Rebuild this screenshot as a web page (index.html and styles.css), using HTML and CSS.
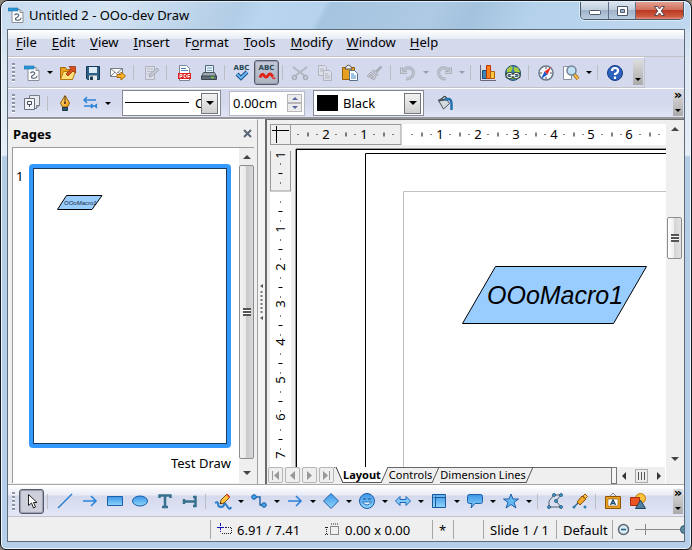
FILE: index.html
```html
<!DOCTYPE html>
<html lang="en">
<head>
<meta charset="utf-8">
<title>Untitled 2 - OOo-dev Draw</title>
<link rel="stylesheet" href="styles.css">
</head>
<body>
<svg class="defs" aria-hidden="true">
  <defs>
    <linearGradient id="blue" x1="0" y1="0" x2="0" y2="1"><stop offset="0" stop-color="#3b95e6"/><stop offset="1" stop-color="#8fd4fb"/></linearGradient>
    <linearGradient id="gold" x1="0" y1="0" x2="1" y2="1"><stop offset="0" stop-color="#ffe98a"/><stop offset="1" stop-color="#f09a10"/></linearGradient>
    <symbol id="doc" viewBox="0 0 16 16"><path d="M4 2.5h8l3 3v10H4z" fill="#fff" stroke="#8b8f99"/><path d="M12 2.500v3h3" fill="#ddd" stroke="#8b8f99"/><path d="M0 1h10v3H0z" fill="#2a96d8" stroke="#1672ac" stroke-width=".6"/><path d="M6.500 8c2-2 5-1 4 1s-3 1-3 3 3 1 4 1 1-2 2-2" fill="none" stroke="#526477" stroke-width="1.200"/></symbol>
  </defs>
</svg>
<div class="window">
  <header class="titlebar">
    <svg class="app-icon"><use href="#doc"/></svg>
    <h1>Untitled 2 - OOo-dev Draw</h1>
    <div class="controls">
      <button class="min" aria-label="Minimize"><svg width="14" height="12"><rect x="1.500" y="5.500" width="11" height="4" rx="1" fill="#fff" stroke="#4c5668"/></svg></button>
      <button class="max" aria-label="Maximize"><svg width="13" height="12"><path d="M1.500 1.500h10v9h-10zM4.500 4.500h4v3h-4z" fill="#fff" fill-rule="evenodd" stroke="#4c5668"/></svg></button>
      <button class="close" aria-label="Close"><svg width="13" height="12"><path d="M1.500 1.500h3l2 2.500 2-2.500h3L8.300 6l3.200 4.500h-3l-2-2.500-2 2.500h-3L4.700 6z" fill="#fff" stroke="#5a4650"/></svg></button>
    </div>
  </header>

  <div class="client">
    <nav class="menubar">
      <button><u>F</u>ile</button><button><u>E</u>dit</button><button><u>V</u>iew</button><button><u>I</u>nsert</button><button>F<u>o</u>rmat</button><button><u>T</u>ools</button><button><u>M</u>odify</button><button><u>W</u>indow</button><button><u>H</u>elp</button>
    </nav>

    <div class="toolbar standard" role="toolbar" aria-label="Standard">
      <i class="grip"></i>
      <button class="tool" aria-label="New"><svg><use href="#doc"/></svg></button><button class="drop" aria-label="New options"></button>
      <button class="tool" aria-label="Open"><svg viewBox="0 0 16 16"><path d="M.5 14.500v-12h5l1 2h6v10z" fill="#e9a31c" stroke="#a8690a"/><path d="M.5 14.500l3-8h12l-3 8z" fill="#ffe07a" stroke="#b87a10"/><path d="M6 9l5-5-2-2.500h6.500V8L13 6 8 11z" fill="#d9501e" stroke="#8c2a08" stroke-width=".7"/></svg></button>
      <button class="tool" aria-label="Save"><svg viewBox="0 0 16 16"><path d="M1.500 1.500h13v13h-12l-1-1z" fill="#2f5f86" stroke="#173a58"/><path d="M4 2h8v6H4z" fill="#dcebf5"/><path d="M4 10.500h8V15H4z" fill="#e8e8e8"/><path d="M5 11.500h3V15H5z" fill="#1c3d58"/></svg></button>
      <button class="tool" aria-label="Email"><svg viewBox="0 0 16 16"><path d="M.5 3.500h12v8H.5z" fill="#fafafa" stroke="#7c8088"/><path d="M.5 3.500l6 5 6-5M.5 11.500l4.500-4.500M12.500 11.500L8 7" fill="none" stroke="#7c8088"/><path d="M7 9.500h4V7l4.500 4-4.500 4v-2.500H7z" fill="#ffb428" stroke="#a86a05"/></svg></button>
      <i class="sep"></i>
      <button class="tool off" aria-label="Edit File"><svg viewBox="0 0 16 16"><path d="M2.500 1.500h9v13h-9z" fill="#dde0e8" stroke="#a9adb8"/><path d="M4 4h6M4 6.500h6M4 9h3" stroke="#b4b8c2"/><path d="M6 12l1-3 7-6 2 2-7 6z" fill="#c6c9d2" stroke="#9da1ac"/></svg></button>
      <i class="sep"></i>
      <button class="tool" aria-label="Export as PDF"><svg viewBox="0 0 16 16"><path d="M3.500.5h7l3 3v12h-10z" fill="#fff" stroke="#7a8696"/><path d="M5 3.500h5M5 5.500h7" stroke="#4d87b8"/><path d="M2 8h13v6H2z" fill="#dc1f1f"/><path d="M4 13V9.500h2v2H4M8 9.500v3h1.500l1-1v-1l-1-1zM12 13V9.500h2M12 11.500h2" fill="none" stroke="#fff" stroke-width=".9"/></svg></button>
      <button class="tool" aria-label="Print"><svg viewBox="0 0 16 16"><path d="M4.500.5h8v8h-8z" fill="#e9f3fb" stroke="#52697c"/><path d="M6 3h5M6 5.500h5" stroke="#7ba3bf"/><path d="M2.500 7.500h11l2 4H.5z" fill="#9fa9b1" stroke="#46525d"/><path d="M.5 11h15v3.500H.5z" fill="#626d77" stroke="#38434d"/><path d="M10 12.500h3" stroke="#6fd23a" stroke-width="1.500"/></svg></button>
      <i class="sep"></i>
      <button class="tool abc" aria-label="Spelling"><span>ABC</span><svg viewBox="0 0 16 9"><path d="M3 2l4 4 6-6" fill="none" stroke="#164a82" stroke-width="4"/><path d="M3 2l4 4 6-6" fill="none" stroke="#6ab8f8" stroke-width="2"/></svg></button>
      <button class="tool abc pressed" aria-label="AutoSpellcheck" aria-pressed="true"><span>ABC</span><svg viewBox="0 0 16 9"><path d="M1 5.500q2-5 4-2t4 0 4 0 2 2" fill="none" stroke="#e02418" stroke-width="3"/></svg></button>
      <i class="sep"></i>
      <button class="tool off" aria-label="Cut"><svg viewBox="0 0 16 16"><path d="M1 2l12 9M15 2L3 11" stroke="#afb2bb" stroke-width="2"/><g fill="none" stroke="#a2a6b0" stroke-width="1.500"><circle cx="2.500" cy="12.500" r="2"/><circle cx="13.500" cy="12.500" r="2"/></g></svg></button>
      <button class="tool off" aria-label="Copy"><svg viewBox="0 0 16 16"><g fill="#e0e2e9" stroke="#aaaeb8"><path d="M1.500.5h6l2 2v8h-8z"/><path d="M6.500 5.500h6l2 2v8h-8z"/></g><path d="M3 4h4M3 6h4M8 9h3M8 11h5M8 13h5" stroke="#aaaeb8"/></svg></button>
      <button class="tool" aria-label="Paste"><svg viewBox="0 0 16 16"><path d="M.5 2.500h12v12H.5z" fill="#e6a020" stroke="#936008"/><path d="M3 4h7l-1-2.500L6.500 0 4 1.500z" fill="#eee" stroke="#555"/><path d="M7.500 5.500h5l3 3v7h-8z" fill="#fff" stroke="#557088"/><path d="M9 9h3M9 11h5M9 13h5" stroke="#3c86c4"/></svg></button>
      <button class="tool off" aria-label="Format Paintbrush"><svg viewBox="0 0 16 16"><path d="M14.500 1.500L9 7" stroke="#a3a7b1" stroke-width="2.500"/><path d="M7 5l4 4-1 2-5-5zM4 7l5 5-2 3-7-4z" fill="#c3c6cf" stroke="#a3a7b1"/><path d="M2 11l3-1M5 13l1-2" stroke="#999"/></svg></button>
      <i class="sep"></i>
      <button class="tool off" aria-label="Undo"><svg viewBox="0 0 16 16"><path d="M1.500 2v5.500H7M2 7l3-3c5-3 10 1 8 6q-2 4-7 4" fill="none" stroke="#a7abb6" stroke-width="3"/><path d="M1.500 2v5.500H7M2 7l3-3c5-3 10 1 8 6q-2 4-7 4" fill="none" stroke="#cbced8"/></svg></button><button class="drop off" aria-label="Undo list"></button>
      <button class="tool off" aria-label="Redo"><svg viewBox="0 0 16 16"><path d="M14.500 2v5.500H9M14 7l-3-3C6 1 1 5 3 10q2 4 7 4" fill="none" stroke="#a7abb6" stroke-width="3"/><path d="M14.500 2v5.500H9M14 7l-3-3C6 1 1 5 3 10q2 4 7 4" fill="none" stroke="#cbced8"/></svg></button><button class="drop off" aria-label="Redo list"></button>
      <i class="sep"></i>
      <button class="tool" aria-label="Chart"><svg viewBox="0 0 16 16"><path d="M.5 0v15.500H16" fill="none" stroke="#667"/><path d="M2.500 5.500h4v8h-4z" fill="#3d83b5" stroke="#1c4a70"/><path d="M6.500.5h4v13h-4z" fill="#ff8018" stroke="#bd3806"/><path d="M10.500 6.500h4v7h-4z" fill="#ffc640" stroke="#b06010"/></svg></button>
      <button class="tool" aria-label="Hyperlink"><svg viewBox="0 0 16 16"><circle cx="8" cy="8" r="7.500" fill="#417cac" stroke="#2c5879"/><path d="M2 4l4-3 2 2-2 4-4 1zM9 2l4 1 2 4-3 1-3-2z" fill="#a6cd39"/><path d="M4 14h8l-1-3H5z" fill="#86b22a"/><rect x="1.500" y="8.500" width="6" height="4" rx="2" fill="none" stroke="#384a45" stroke-width="2.500"/><rect x="8.500" y="8.500" width="6" height="4" rx="2" fill="none" stroke="#384a45" stroke-width="2.500"/><path d="M2 10.500q0-2 2-2h2q1 0 1 2t-1 2H4q-2 0-2-2m7 0q0-2 1-2h2q2 0 2 2t-2 2h-2q-1 0-1-2M5.500 10.500h5" fill="none" stroke="#f4f7f2"/></svg></button>
      <i class="sep"></i>
      <button class="tool" aria-label="Navigator"><svg viewBox="0 0 16 16"><circle cx="8" cy="8" r="7" fill="#f5f8fb" stroke="#687788" stroke-width="1.500"/><path d="M8 2v2M8 12v2M2 8h2M12 8h2" stroke="#555"/><path d="M13 2L9.500 9.500l-3-3z" fill="#e72c20"/><path d="M3 14l3.500-7.500 3 3z" fill="#1a58d0"/></svg></button>
      <button class="tool" aria-label="Zoom"><svg viewBox="0 0 16 16"><path d="M.5 1.500h8v13h-8z" fill="#fff" stroke="#8892a0"/><path d="M11 9l4 5" stroke="#985e08" stroke-width="3.500"/><path d="M11 9l4 5" stroke="#ffc247" stroke-width="2"/><circle cx="8.500" cy="5.500" r="4.500" fill="#bfe1f3" stroke="#718495" stroke-width="1.500"/></svg></button><button class="drop" aria-label="Zoom options"></button>
      <i class="sep"></i>
      <button class="tool" aria-label="Help"><svg viewBox="0 0 16 16"><circle cx="8" cy="8" r="7.500" fill="#2d62bd" stroke="#143b85"/><path d="M5 6q0-3 3-3t3 2.500-3 3.500v1M8 11.500V14" fill="none" stroke="#fff" stroke-width="2.200"/></svg></button>
      <button class="more" aria-label="Toolbar options"></button>
    </div>

    <div class="toolbar format" role="toolbar" aria-label="Line and Filling">
      <i class="grip"></i>
      <button class="tool" aria-label="Styles"><svg viewBox="0 0 16 16"><path d="M5.500.5h10v10l-3 3h-7z" fill="#e8eaf0" stroke="#777e8b"/><path d="M15.500 10.500h-3v3" fill="#bbb" stroke="#777e8b"/><path d="M.5 3.500h10v11H.5z" fill="#f4f5f8" stroke="#676e7c"/><path d="M3.500 6.500h4v3h-4zM5.500 9.500V12" fill="#fff" stroke="#444b58"/></svg></button>
      <i class="sep"></i>
      <button class="tool" aria-label="Line"><svg viewBox="0 0 16 16"><path d="M8 .5l4.500 7.500-2 4h-5l-2-4z" fill="url(#gold)" stroke="#8e5a08"/><path d="M8 1v7" stroke="#553405"/><circle cx="8" cy="8" r="1" fill="#422"/><path d="M5.500 12.500h5v3h-5z" fill="#31586e" stroke="#18374b"/></svg></button>
      <button class="tool" aria-label="Arrow Style"><svg viewBox="0 0 16 16"><path d="M2 5h12M5 2L2 5l3 3M2 11h13M9 9l2 2-2 2M15 9l-2 2 2 2" fill="none" stroke="#2f84d8" stroke-width="1.500"/></svg></button><button class="drop" aria-label="Arrow styles"></button>
      <label class="combo line-style"><svg viewBox="0 0 64 2"><path d="M0 .5h64" stroke="#000"/></svg><select aria-label="Line Style"><option>Continuous</option></select><i class="arrow"></i></label>
      <div class="spin"><input type="text" aria-label="Line Width" value="0.00cm"><span><button class="up" aria-label="Increase"></button><button class="down" aria-label="Decrease"></button></span></div>
      <label class="combo color"><i class="swatch"></i><select aria-label="Line Color"><option>Black</option></select><i class="arrow"></i></label>
      <button class="tool bucket" aria-label="Area"><svg viewBox="0 0 16 16"><path d="M1.500 5.500l6-4 5 7-6 5.500z" fill="#d5dade" stroke="#44535c"/><path d="M4 4l4-3 3 3" fill="none" stroke="#39464e"/><path d="M1.500 5.500l7-1" stroke="#44535c" stroke-width="2"/><path d="M8 5q6-3 6.500 3V15" fill="none" stroke="#2171ad" stroke-width="2.500"/></svg></button>
      <button class="more chevrons" aria-label="More controls">»</button>
    </div>

    <main class="workspace">
      <aside class="pages">
        <div class="pane-head"><h2>Pages</h2><button aria-label="Close pane"><svg width="10" height="10"><path d="M1 1l7 7M8 1L1 8" stroke="#596777" stroke-width="2"/></svg></button></div>
        <div class="list">
          <div class="slides">
            <span class="number">1</span>
            <figure>
              <div class="thumb"><svg><g transform="translate(23 26)"><path d="M9.500.5H45L35 14.500H.5z" fill="#9cf" stroke="#000"/><text x="7" y="10" class="mini-label">OOoMacro1</text></g></svg></div>
              <figcaption>Test Draw</figcaption>
            </figure>
          </div>
          <div class="vscroll"><i class="up"></i><b class="handle"></b><i class="down"></i></div>
        </div>
      </aside>
      <div class="splitter"><svg width="6" height="36"><path d="M4 0v4L1 2zM4 32v4l-3-2z" fill="#555"/><path d="M2.500 7v22" stroke="#777" stroke-width="2" stroke-dasharray="2 2"/></svg></div>

      <section class="editor">
        <div class="drawing">
          <div class="origin"><svg width="19" height="19"><path d="M1 5.500h17M5.500 1v17" stroke="#000"/></svg></div>
          <div class="hruler"><svg>
            <rect class="outside" x="-1" y="0.500" width="111" height="20"/>
            <path class="dots" d="M6.500 10.500H374"/><path class="halves" d="M16.500 10.500H374"/>
            <g class="scale"><text x="35" y="15">2</text><text x="73" y="15">1</text><text x="149" y="15">1</text><text x="187" y="15">2</text><text x="225" y="15">3</text><text x="263" y="15">4</text><text x="300" y="15">5</text><text x="338" y="15">6</text></g>
          </svg></div>
          <div class="vruler"><svg>
            <rect class="outside" x="0.500" y="-1" width="20" height="41"/>
            <g transform="rotate(-90)">
              <path class="vdots" d="M-12.500 10.500H-317"/><path class="vhalves" d="M-22 10.500H-317"/>
              <g class="scale"><text x="-4" y="15">1</text><text x="-78" y="15">1</text><text x="-116" y="15">2</text><text x="-153" y="15">3</text><text x="-191" y="15">4</text><text x="-229" y="15">5</text><text x="-266" y="15">6</text><text x="-304" y="15">7</text></g>
            </g>
          </svg></div>
          <div class="canvas"><svg>
            <path d="M68.500 2000V2.500H2000" fill="none" stroke="#000"/>
            <path d="M106.500 2000V40.500H2000" fill="none" stroke="#c0c0c0"/>
            <path d="M198.500 115.500h151l-33 57h-151z" fill="#9cf" stroke="#000"/>
            <text x="190" y="153" class="shape-label">OOoMacro1</text>
          </svg></div>
        </div>
        <div class="vscroll main-scroll"><i class="up"></i><b class="handle"></b><i class="down"></i></div>
        <div class="sheetbar">
          <div class="nav">
            <button aria-label="First"><svg width="9" height="9"><path d="M1 0h1v9H1zM8 0v9L3 4.500z"/></svg></button><button aria-label="Previous"><svg width="9" height="9"><path d="M7 0v9L2 4.500z"/></svg></button><button aria-label="Next"><svg width="9" height="9"><path d="M2 0v9l5-4.500z"/></svg></button><button aria-label="Last"><svg width="9" height="9"><path d="M1 0v9l5-4.500zM7 0h1v9H7z"/></svg></button>
          </div>
          <div class="tabs">
            <svg class="slant back" width="8" height="17"><path d="M0 0l7 16h1V0z" fill="#fff"/><path d="M1 0l7 16" stroke="#333"/></svg><button class="current">Layout</button><svg class="slant" width="8" height="17"><path d="M0 0h7L0 16z" fill="#fff"/><path d="M7 0L0 16" stroke="#555"/></svg><button>Controls</button><svg class="slant" width="8" height="17"><path d="M7 0L0 16" stroke="#555"/></svg><button>Dimension Lines</button><svg class="slant" width="8" height="17"><path d="M7 0L0 16" stroke="#555"/></svg>
          </div>
          <i class="tab-split"></i>
          <div class="hscroll"><i class="left"></i><b></b><i class="right"></i></div>
        </div>
      </section>
    </main>

    <div class="toolbar draw" role="toolbar" aria-label="Drawing">
      <i class="grip"></i>
      <button class="tool pressed" aria-label="Select" aria-pressed="true"><svg viewBox="0 0 16 16"><path d="M4.500 1.500v11l3-2.500 2 5 2-1-2-4.500h3.500z" fill="#fff" stroke="#222"/></svg></button>
      <i class="sep"></i>
      <button class="tool" aria-label="Line"><svg viewBox="0 0 16 16"><path d="M1 15L15 1" stroke="#2d7cc9" stroke-width="1.500"/></svg></button>
      <button class="tool" aria-label="Line Ends with Arrow"><svg viewBox="0 0 16 16"><path d="M1 8h13M9 3l5 5-5 5" fill="none" stroke="#2b83dc" stroke-width="1.600"/></svg></button>
      <button class="tool" aria-label="Rectangle"><svg viewBox="0 0 16 16"><path d="M.5 3.500h15v9H.5z" fill="url(#blue)" stroke="#1d5fa8"/></svg></button>
      <button class="tool" aria-label="Ellipse"><svg viewBox="0 0 16 16"><ellipse cx="8" cy="8" rx="7.500" ry="5" fill="url(#blue)" stroke="#1d5fa8"/></svg></button>
      <button class="tool" aria-label="Text"><svg viewBox="0 0 16 16"><path d="M2.500 5V2.500h11V5M8 2v12M5 14h6" fill="none" stroke="#37708d" stroke-width="2.500"/></svg></button>
      <button class="tool" aria-label="Vertical Text"><svg viewBox="0 0 16 16"><path d="M11 4h2.500v9H11M14 8.500H2M2 6v5" fill="none" stroke="#37708d" stroke-width="2.500"/></svg></button>
      <i class="sep"></i>
      <button class="tool" aria-label="Curve"><svg viewBox="0 0 16 16"><path d="M0 10q3-2 3 1t3 3 3-3 3 2 4 1" fill="none" stroke="#287cca" stroke-width="2"/><path d="M5 11l1-4 6-6 3 3-6 6z" fill="#ffc33b" stroke="#835019"/><path d="M11 2l1-1.500 3 3L14 5z" fill="#e84d36"/><path d="M5 11l.5-2L7 10.500z" fill="#222"/></svg></button><button class="drop" aria-label="Curves"></button>
      <button class="tool" aria-label="Connector"><svg viewBox="0 0 16 16"><path d="M3 4h6v8h4" fill="none" stroke="#2569a5" stroke-width="1.500"/><circle cx="3" cy="4" r="2.300" fill="#49a3e9" stroke="#175fa4"/><circle cx="13" cy="12" r="2.300" fill="#49a3e9" stroke="#175fa4"/></svg></button><button class="drop" aria-label="Connectors"></button>
      <button class="tool" aria-label="Arrows"><svg viewBox="0 0 16 16"><path d="M1 8h13M9 3l5 5-5 5" fill="none" stroke="#2b83dc" stroke-width="1.600"/></svg></button><button class="drop" aria-label="Arrow lines"></button>
      <button class="tool" aria-label="Basic Shapes"><svg viewBox="0 0 16 16"><path d="M8 .5L15.500 8 8 15.500.5 8z" fill="url(#blue)" stroke="#1d5fa8"/></svg></button><button class="drop" aria-label="More basic shapes"></button>
      <button class="tool" aria-label="Symbol Shapes"><svg viewBox="0 0 16 16"><circle cx="8" cy="8" r="7.500" fill="url(#blue)" stroke="#1d5fa8"/><path d="M4.500 5.500h2v1h-2zM9.500 5.500h2v1h-2zM3.500 9q4.500 6 9 0z" fill="#dff3ff" stroke="#1d5fa8" stroke-width=".8"/></svg></button><button class="drop" aria-label="More symbols"></button>
      <button class="tool" aria-label="Block Arrows"><svg viewBox="0 0 16 16"><path d="M.5 8L5 3.500v3h6v-3L15.500 8 11 12.500v-3H5v3z" fill="#82cafa" stroke="#1d65b4"/></svg></button><button class="drop" aria-label="More block arrows"></button>
      <button class="tool" aria-label="Flowcharts"><svg viewBox="0 0 16 16"><path d="M1.500 1.500h13v13h-13z" fill="url(#blue)" stroke="#17589c"/><path d="M4.500 1v14M1 4.500h14" stroke="#17589c"/><path d="M2.500 3h12M3 2v12" stroke="#a4dcff" stroke-width=".7"/></svg></button><button class="drop" aria-label="More flowcharts"></button>
      <button class="tool" aria-label="Callouts"><svg viewBox="0 0 16 16"><path d="M2.500 1.500h11q2 0 2 2v5q0 2-2 2H8L4 15l1-4.500H2.500q-2 0-2-2v-5q0-2 2-2" fill="url(#blue)" stroke="#1d5fa8"/></svg></button><button class="drop" aria-label="More callouts"></button>
      <button class="tool" aria-label="Stars"><svg viewBox="0 0 16 16"><path d="M8 1l2 5h5.500L11 9.500l2 5.500-5-3.500L3 15l2-5.500L.5 6H6z" fill="#65b9f3" stroke="#1d5fa8"/></svg></button><button class="drop" aria-label="More stars"></button>
      <i class="sep"></i>
      <button class="tool" aria-label="Points"><svg viewBox="0 0 16 16"><path d="M14 2H7L2 8v6h12L9 8l5-6" fill="none" stroke="#52606b"/><g fill="#42a0d5" stroke="#20506f" stroke-width=".8"><circle cx="14" cy="2" r="1.500"/><circle cx="7" cy="2" r="1.500"/><circle cx="2" cy="14" r="1.500"/><circle cx="14" cy="14" r="1.500"/><circle cx="9" cy="8" r="1.500"/></g></svg></button>
      <button class="tool" aria-label="Glue Points"><svg viewBox="0 0 16 16"><path d="M1.500 14.500L8 8" stroke="#336a90" stroke-width="1.500"/><path d="M5 9l5-6 4 3-6 6z" fill="#f4a62b" stroke="#8c5909"/><path d="M11 3l2-2 2.500 2.500-2 2z" fill="#ffc84a" stroke="#8c5909"/><circle cx="2" cy="14" r="1.500" fill="#327db0"/><circle cx="13" cy="14" r="1.500" fill="#327db0"/></svg></button>
      <i class="sep"></i>
      <button class="tool" aria-label="Fontwork"><svg viewBox="0 0 16 16"><path d="M5 3l3-3 3 3" fill="none" stroke="#888"/><path d="M.5 3.500h15v12H.5z" fill="#eaa021" stroke="#8d5406"/><path d="M3 6h10v7H3z" fill="#fff" stroke="#8d5406" stroke-width=".6"/><path d="M5.500 12L8 7l2.500 5M6.500 10.500h3" fill="none" stroke="#245474" stroke-width="1.500"/></svg></button>
      <button class="tool" aria-label="From File"><svg viewBox="0 0 16 16"><circle cx="10.500" cy="5.500" r="5" fill="#ffc03b" stroke="#c27b10"/><path d="M.5 4.500h9v8h-9z" fill="#ec5423" stroke="#a52b0a"/><path d="M10.500 7l5 8.500h-10z" fill="#50809f" stroke="#23455d"/></svg></button>
      <button class="more chevrons" aria-label="More controls">»</button>
    </div>

    <footer class="status">
      <span class="cell"></span>
      <span class="cell metrics">
        <svg width="16" height="13"><path d="M0 4.500h9M3.500 0v9" stroke="#1414b8" stroke-dasharray="3 1"/><path d="M9 4.500h5.500v6H4" fill="none" stroke="#222" stroke-dasharray="1 1"/></svg><span class="position">6.91 / 7.41</span>
        <svg width="16" height="13"><path d="M5.500 3.500h8v8h-8zM1.500 4v8M0 4.500h3M0 11.500h3M6 1h8" fill="none" stroke="#222" stroke-dasharray="1 1"/></svg><span>0.00 x 0.00</span>
      </span>
      <span class="cell modified">*</span>
      <span class="cell signature"></span>
      <span class="cell slide">Slide 1 / 1</span>
      <span class="cell style">Default</span>
      <span class="cell zoom"><button aria-label="Zoom out"><svg width="13" height="13"><circle cx="6.500" cy="6.500" r="5" fill="#d8ecf8" stroke="#5c6570" stroke-width="1.500"/><path d="M4 6.500h5" stroke="#24567c" stroke-width="1.500"/></svg></button><input type="range" aria-label="Zoom" value="50"></span>
    </footer>
  </div>
</div>
</body>
</html>
```

FILE: styles.css
```css
* { box-sizing: border-box; }
body { margin: 0; font: 13px/18px "Noto Sans", sans-serif; color: #000; background: #8b8177; }
button, input, select { font: inherit; color: inherit; margin: 0; padding: 0; border: 0; background: none; }
button { display: flex; align-items: center; justify-content: center; flex: none; }
svg { display: block; flex: none; }
i { font-style: normal; }
h1, h2, figure { margin: 0; font-size: 13px; }
.defs { position: absolute; width: 0; height: 0; }

.window {
  height: 100vh; min-height: 400px; padding: 0 6px 7px; display: flex; flex-direction: column; overflow: hidden;
  border: 1px solid #14181f; border-radius: 8px 8px 6px 6px;
  background: linear-gradient(#c2d6ea, #dbe7f3 60px, #e6eef7 154px, #b5cce6 156px, #b5cfea);
  box-shadow: inset 0 0 0 1px #eef6fd;
}

/* Title bar */
.titlebar {
  display: flex; align-items: center; height: 28px; flex: none; margin: 0 -5px; padding: 0 6px 2px;
  background: linear-gradient(118deg, #c9dcef 0, #d3e3f3 16%, #b2cde6 34%, #bad5ee 38%, #b6d2ec 46%, #a5c4df 47%, #aecae4 62%, #a3c2dd 68%, #b5d2eb 76%, #bfd8ef);
  border-top: 1px solid #e3f0fb; border-radius: 7px 7px 0 0;
}
.app-icon { width: 16px; height: 16px; }
.titlebar h1 { margin-left: 5px; font-weight: 400; flex: 1; white-space: nowrap; }
.controls { display: flex; align-self: flex-start; height: 18px; border: 1px solid #4a5767; border-top: 0; border-radius: 0 0 5px 5px; overflow: hidden; box-shadow: 0 0 0 1px #dcebf8; }
.controls button { height: 100%; background: linear-gradient(#dce6f0, #c0cedd 45%, #9fb2c7 50%, #bacde0); }
.controls .min { width: 28px; border-right: 1px solid #60708a; }
.controls .max { width: 27px; border-right: 1px solid #60708a; }
.controls .close { width: 47px; background: linear-gradient(#e3a090, #d0705c 45%, #b93a22 50%, #cf5a40 85%, #e09080); }

.client { flex: 1; min-height: 0; display: flex; flex-direction: column; border: 1px solid #5d6a79; background: #d4d9ed; }

/* Menu */
.menubar { display: flex; gap: 1px; flex: none; height: 27px; padding: 0 1px 2px; background: linear-gradient(#fff, #e6ebf3 9px, #d4d9ec 9px, #d4d9ec); border-bottom: 1px solid #c3c3c6; }
.menubar button { padding: 0 7px; display: block; }
.menubar button:nth-child(n+7) { padding-right: 6px; }
u { text-underline-offset: 2px; }

/* Toolbars */
.toolbar { display: flex; align-items: center; flex: none; height: 31px; background: #d4d9ed; border-top: 1px solid #fff; }
.standard { align-self: flex-start; border-right: 1px solid #c3c3c6; border-bottom: 1px solid #c3c3c6; }
.format { height: 31px; background: linear-gradient(#d4d9ed 50%, #e0e4f5); border-bottom: 2px solid #96969c; }
.draw { height: 32px; background: linear-gradient(#fff, #e8ebf6 9px, #d4d9ed 10px, #e2e6f6); border-bottom: 1px solid #c3c3c6; }
.grip { width: 3px; height: 19px; margin: 0 4px; background: repeating-linear-gradient(#8e93a6 0 2px, #fff 2px 3px, transparent 3px 4px); }
.tool { width: 25px; height: 25px; }
.tool svg { width: 16px; height: 16px; overflow: visible; }
.tool.off svg { opacity: .85; }
.pressed { border: 1px solid #555b68; border-radius: 3px; background: linear-gradient(#c5cad9, #aeb3c2); box-shadow: inset 0 0 1px 1px #979dac; }
.draw .pressed { background: #cdd0da; }
.abc { flex-direction: column; }
.abc span { font: bold 7px/8px "DejaVu Sans", sans-serif; color: #284856; }
.abc svg { height: 9px; }
.drop { width: 11px; height: 25px; }
.drop::before, .more::after { content: ""; border: solid transparent; border-width: 3px 3px 0; border-top-color: #000; }
.drop.off::before { border-top-color: #999da8; }
.sep { width: 8px; height: 15px; flex: none; background: linear-gradient(90deg, transparent 3px, #bdbdc2 3px 4px, transparent 4px); }
.more { width: 10px; height: 25px; margin: 0 1px 0 6px; padding-bottom: 4px; align-items: flex-end; background: linear-gradient(#dcdcdc, #c8c8c8 40%, #aaa); }
.chevrons { flex-direction: column; justify-content: space-between; align-items: center; margin-left: auto; font: bold 13px/8px "DejaVu Sans", sans-serif; }

.combo { display: flex; align-items: center; height: 26px; padding: 2px; background: #fff; border: 1px solid #858895; }
.combo select { appearance: none; min-width: 0; overflow: hidden; outline: 0; }
.arrow { display: flex; align-items: center; justify-content: center; width: 17px; height: 21px; flex: none; border: 1px solid #73757d; background: linear-gradient(#f3f3f3, #ddd 60%, #d0d0d0); pointer-events: none; }
.arrow::before { content: ""; border: solid transparent; border-width: 4px 4px 0; border-top-color: #000; }
.line-style { width: 99px; margin-left: 9px; }
.line-style svg { width: 64px; height: 2px; }
.line-style select { width: 13px; padding-left: 6px; text-overflow: clip; }
.color { width: 111px; margin-left: 8px; }
.swatch { width: 21px; height: 16px; margin-left: 1px; flex: none; background: #000; }
.color select { flex: 1; padding-left: 5px; }
.spin { display: flex; align-items: center; width: 76px; height: 25px; margin-left: 8px; padding: 1px 2px; background: #fff; border: 1px solid #b6b8c2; }
.spin input { width: 0; flex: 1; padding-left: 1px; }
.spin button { width: 15px; height: 9px; border: 1px solid #b7b7bb; background: #ececec; }
.spin button::before { content: ""; border: solid transparent; border-width: 0 3px 3px; border-bottom-color: #5464a4; }
.spin .down::before { transform: rotate(180deg); }
.bucket { margin-left: 8px; }

/* Pages pane */
.workspace { flex: 1; min-height: 0; display: flex; background: #efefef; border-bottom: 1px solid #a8a8a8; }
.pages { width: 250px; flex: none; display: flex; flex-direction: column; padding: 0 3px 1px 4px; border-top: 1px solid #fff; border-right: 1px solid #a2a2a2; }
.pane-head { display: flex; align-items: center; justify-content: space-between; height: 27px; padding: 0 1px; }
.list { flex: 1; min-height: 0; display: flex; background: #fff; border: 1px solid #9c9c9c; border-right: 0; border-bottom: 0; }
.slides { flex: 1; display: flex; padding: 16px 8px 0 3px; min-height: 0; }
.number { width: 13px; padding-top: 3px; }
.slides figure { flex: 1; display: flex; flex-direction: column; min-width: 0; }
.thumb { flex: 1; min-height: 0; border: 4px solid #39f; border-radius: 4px; overflow: hidden; }
.thumb svg { width: 100%; height: 100%; border: 1px solid #183a60; }
.mini-label { font: italic 6px "Liberation Sans", sans-serif; fill: #123; }
figcaption { height: 35px; padding-top: 6px; text-align: right; }

.vscroll { width: 15px; flex: none; display: flex; flex-direction: column; background: #efefef; }
.vscroll i { height: 17px; display: flex; align-items: center; justify-content: center; flex: none; }
.vscroll i::before { content: ""; border: solid transparent; border-width: 0 4px 4px; border-bottom-color: #444; }
.vscroll .down::before { transform: rotate(180deg); }
.handle { flex: 1; display: flex; align-items: center; justify-content: center; border: 1px solid #8d8d90; border-radius: 2px; background: linear-gradient(90deg, #f4f4f4, #e7e7e7 45%, #cacacd 50%, #d8d8da); }
.handle::before { content: ""; width: 8px; height: 8px; background: repeating-linear-gradient(#555 0 2px, #fff 2px 3px); }
.list .down { height: 24px; padding-top: 4px; }

.splitter { width: 7px; flex: none; display: flex; align-items: center; justify-content: center; background: #f4f4f4; }

/* Drawing area */
.editor { flex: 1; min-width: 0; display: grid; grid-template: minmax(0, 1fr) 17px / minmax(0, 1fr) 18px; border-left: 2px solid #6b6b6b; border-top: 1px solid #6b6b6b; }
.drawing { display: grid; grid-template: 22px minmax(0, 1fr) / 21px minmax(0, 1fr); padding: 4px 0 0 3px; }
.drawing svg { width: 100%; height: 100%; }
.origin { width: 21px; height: 21px; border: 1px solid #999; }
.hruler { height: 21px; background: #fff; overflow: hidden; }
.vruler { margin-top: 5px; width: 21px; background: #fff; overflow: hidden; }
.outside { fill: #efefef; stroke: #999; }
.scale text { font-size: 13px; text-anchor: middle; }
.dots, .vdots { stroke: #000; stroke-width: 1; stroke-dasharray: 1 18 1 18; fill: none; }
.halves, .vhalves { stroke: #000; stroke-width: 4; stroke-dasharray: 1 37; fill: none; }
.canvas { margin: 3px 0 0 5px; background: #fff; border: 1px solid #000; border-width: 1px 0 0 1px; box-shadow: 0 -1px #999, -1px 0 #999; padding-top: 1px; overflow: hidden; }
.canvas .shape-label { font: italic 26px "Liberation Sans", sans-serif; }
.canvas .shape-label { font-size: 25px; }

.main-scroll { width: 15px; margin-left: 1px; }
.main-scroll .handle { flex: none; height: 42px; margin: 80px 0 auto; background: linear-gradient(90deg, #fff, #eee 45%, #d5d5d7 50%, #e3e3e4); }
.sheetbar { display: flex; grid-column: 1; min-width: 0; border-right: 1px solid #fff; }
.nav { display: flex; gap: 2px; margin-left: 1px; }
.nav button { width: 15px; height: 16px; border: 1px solid #b5b5b5; border-radius: 2px; fill: #999; }
.tabs { display: flex; flex: 1; min-width: 0; overflow: hidden; background: linear-gradient(#666 1px, transparent 1px); }
.tabs button { height: 16px; font-size: 11px; line-height: 14px; border-top: 1px solid #666; border-bottom: 1px solid #555; }
.tabs .current { background: #fff; font-weight: 700; border-top-color: #fff; }
.back { margin-left: 1px; }
.tab-split { width: 6px; border: 1px solid #777; background: #f5f5f5; }
.hscroll { width: 48px; display: flex; align-items: center; justify-content: space-around; }
.hscroll i { border: solid transparent; border-width: 4px 4px 4px 0; border-right-color: #333; }
.hscroll .right { transform: rotate(180deg); }
.hscroll b { width: 13px; height: 14px; border: 1px solid #aaa; background: repeating-linear-gradient(90deg, #555 0 1px, #eee 1px 3px) center / 7px 8px no-repeat, #ececec; }

/* Status bar */
.status { display: flex; flex: none; height: 24px; padding: 3px 0 2px; background: #efefef; }
.cell { display: flex; align-items: center; flex: none; border-left: 1px solid #a6a6a6; white-space: nowrap; }
.cell:first-child { flex: 1; border: 0; }
.metrics { width: 222px; padding-left: 6px; gap: 4px; }
.position { width: 84px; }
.modified { width: 21px; padding-left: 6px; }
.signature { width: 30px; }
.slide { width: 73px; padding-left: 6px; }
.style { width: 56px; padding-left: 6px; }
.zoom { width: 72px; padding-left: 4px; gap: 5px; overflow: hidden; }
.zoom input { appearance: none; width: 98px; height: 11px; flex: none; background: linear-gradient(#888, #888) 10px 0 / 1px 11px no-repeat, linear-gradient(#888, #888) 0 5px / 100% 1px no-repeat; }
.zoom input::-webkit-slider-thumb { appearance: none; width: 9px; height: 9px; border: 1px solid #305468; border-radius: 5px; background: #5b8da8; }

@media (max-width: 660px) { .standard { max-width: 100%; overflow: hidden; } }
```
